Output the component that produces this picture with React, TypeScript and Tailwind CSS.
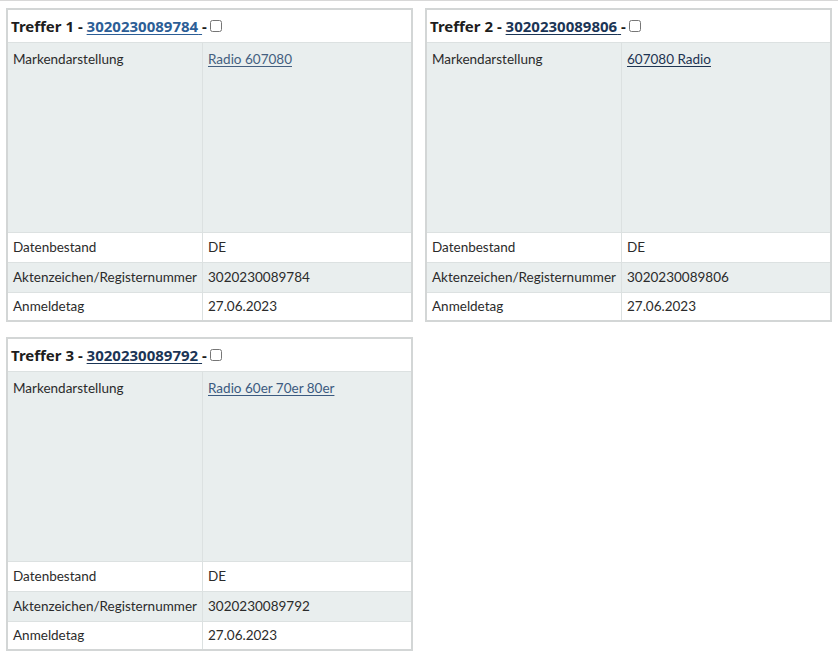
import React from "react";

type Hit = {
  nr: number;
  id: string;
  marke: string;
  headLink: string;
  markeLink: string;
};

const hits: Hit[] = [
  { nr: 1, id: "3020230089784", marke: "Radio 607080", headLink: "text-[#2c5e96]", markeLink: "text-[#445f80]" },
  { nr: 2, id: "3020230089806", marke: "607080 Radio", headLink: "text-[#1b3556]", markeLink: "text-[#1e3452]" },
  { nr: 3, id: "3020230089792", marke: "Radio 60er 70er 80er", headLink: "text-[#1b3556]", markeLink: "text-[#3b5a80]" },
];

const Row = ({ label, children, shaded, h, last }: { label: string; children: React.ReactNode; shaded?: boolean; h: string; last?: boolean }) => {
  const tall = h === "tall";
  const cell = `${shaded ? "bg-[#e9eeee]" : "bg-white"} ${last ? "" : "border-b"} border-[#dce1e1] px-[5px] ${
    tall ? "h-[190px] pt-[6px]" : `${h} flex items-center`
  }`;
  return (
    <>
      <div className={`${cell} border-r`}>{label}</div>
      <div className={cell}>{children}</div>
    </>
  );
};

const HitCard = ({ hit }: { hit: Hit }) => (
  <div className="border-2 border-[#d3d6d6] bg-white">
    <div
      className="h-[33px] flex items-center px-[3px] border-b border-[#dce1e1] text-[15px] font-bold text-[#1d1d1d]"
      style={{ fontFamily: "'Noto Sans', sans-serif" }}
    >
      <span>Treffer {hit.nr} -&nbsp;</span>
      <a href="#" className={`underline underline-offset-2 ${hit.headLink}`}>
        {hit.id}&nbsp;
      </a>
      <span>-</span>
      <input type="checkbox" className="ml-[3px] w-[12px] h-[12px]" />
    </div>
    <div className="grid grid-cols-[195px_1fr] text-[13.5px] text-[#2b2b2b]">
      <Row label="Markendarstellung" shaded h="tall">
        <a href="#" className={`underline underline-offset-2 ${hit.markeLink}`}>
          {hit.marke}
        </a>
      </Row>
      <Row label="Datenbestand" h="h-[30px]">
        DE
      </Row>
      <Row label="Aktenzeichen/Registernummer" shaded h="h-[30px]">
        {hit.id}
      </Row>
      <Row label="Anmeldetag" h="h-[27px]" last>
        27.06.2023
      </Row>
    </div>
  </div>
);

export default function App() {
  return (
    <div
      className="w-[838px] h-[660px] bg-white border-t border-[#d8d8d8] pt-[7px] px-[6px]"
      style={{ fontFamily: "Lato, 'Noto Sans', sans-serif" }}
    >
      <div className="grid grid-cols-2 gap-x-[12px] gap-y-[15px] items-start">
        {hits.map((h) => (
          <HitCard key={h.nr} hit={h} />
        ))}
      </div>
    </div>
  );
}
